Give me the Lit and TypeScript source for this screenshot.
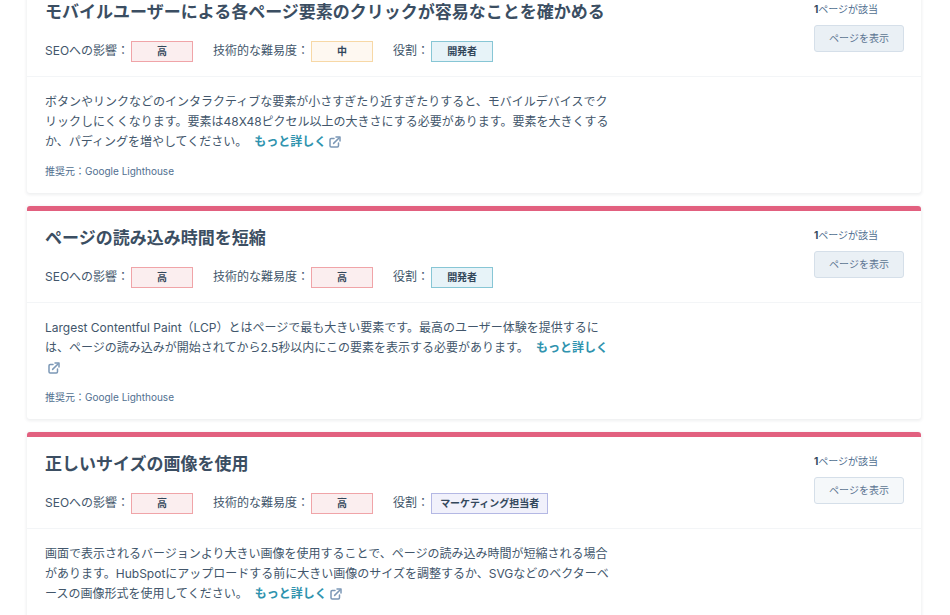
import { LitElement, html, css, svg } from "lit";
import { customElement, property } from "lit/decorators.js";
import { classMap } from "lit/directives/class-map.js";

type Tone = "high" | "medium" | "developer" | "marketer";

interface Tag {
  label: string;
  value: string;
  tone: Tone;
}

interface Recommendation {
  title: string;
  tags: Tag[];
  lines: string[];
  source?: string;
  iconOnNewLine?: boolean;
  quietButton?: boolean;
}

const impact: Tag = { label: "SEOへの影響：", value: "高", tone: "high" };
const difficulty = (value: string, tone: Tone): Tag => ({ label: "技術的な難易度：", value, tone });
const role = (value: string, tone: Tone): Tag => ({ label: "役割：", value, tone });

const recommendations: Recommendation[] = [
  {
    title: "モバイルユーザーによる各ページ要素のクリックが容易なことを確かめる",
    tags: [impact, difficulty("中", "medium"), role("開発者", "developer")],
    lines: [
      "ボタンやリンクなどのインタラクティブな要素が小さすぎたり近すぎたりすると、モバイルデバイスでク",
      "リックしにくくなります。要素は48X48ピクセル以上の大きさにする必要があります。要素を大きくする",
      "か、パディングを増やしてください。",
    ],
    source: "Google Lighthouse",
  },
  {
    title: "ページの読み込み時間を短縮",
    tags: [impact, difficulty("高", "high"), role("開発者", "developer")],
    lines: [
      "Largest Contentful Paint（LCP）とはページで最も大きい要素です。最高のユーザー体験を提供するに",
      "は、ページの読み込みが開始されてから2.5秒以内にこの要素を表示する必要があります。",
    ],
    source: "Google Lighthouse",
    iconOnNewLine: true,
  },
  {
    title: "正しいサイズの画像を使用",
    tags: [impact, difficulty("高", "high"), role("マーケティング担当者", "marketer")],
    lines: [
      "画面で表示されるバージョンより大きい画像を使用することで、ページの読み込み時間が短縮される場合",
      "があります。HubSpotにアップロードする前に大きい画像のサイズを調整するか、SVGなどのベクターベ",
      "ースの画像形式を使用してください。",
    ],
    quietButton: true,
  },
];

const externalPaths = svg`
  <path d="M5 2.5H2.2Q1 2.5 1 3.7V9.8Q1 11 2.2 11H8.3Q9.5 11 9.5 9.8V7" />
  <path d="M4.6 7.4L10 2" />
  <path d="M7 1H11V5" />
`;

@customElement("recommendation-card")
export class RecommendationCard extends LitElement {
  @property({ attribute: false }) item!: Recommendation;

  static styles = css`
    :host {
      display: block;
      border-top: 5px solid #e2607f;
      border-radius: 3px;
      background: #fff;
      box-shadow: 0 1px 3px 1px rgba(45, 62, 80, 0.08);
    }
    .head {
      display: flex;
      justify-content: space-between;
      padding: 14px 17px 14px 18px;
      border-bottom: 1px solid #f3f5f7;
    }
    .title {
      margin: 0 0 16px;
      font-size: 17px;
      line-height: 26px;
      font-weight: 600;
      color: #3b4e62;
    }
    .tags {
      display: flex;
      gap: 20px;
    }
    .pair {
      display: flex;
      gap: 2px;
      line-height: 20px;
      white-space: nowrap;
    }
    .tag {
      box-sizing: border-box;
      min-width: 62px;
      height: 21px;
      padding: 0 8px;
      border: 1px solid;
      font-size: 10px;
      line-height: 19px;
      font-weight: 700;
      text-align: center;
      color: #33475b;
    }
    .high {
      background: #fbeeef;
      border-color: #f0a4a8;
    }
    .medium {
      background: #fef8f1;
      border-color: #f7d8a6;
    }
    .developer {
      background: #e7f3f8;
      border-color: #87c6d5;
    }
    .marketer {
      background: #f1f1fb;
      border-color: #b4b8e4;
    }
    .side {
      flex: none;
      width: 90px;
      font-size: 10px;
      color: #516f90;
    }
    .count {
      margin: 0 0 5px;
      line-height: 21px;
    }
    .count b {
      color: #33475b;
    }
    .show {
      display: block;
      width: 100%;
      height: 27px;
      padding: 0 0 2px;
      border: 1px solid #d5dfe9;
      border-radius: 3px;
      background: #eaf0f5;
      font: inherit;
      color: #5c7592;
    }
    .show.quiet {
      background: #f5f8fa;
    }
    .body {
      padding: 15px 18px 12px;
    }
    .text {
      margin: 0;
      line-height: 20px;
      white-space: nowrap;
    }
    .more {
      margin-left: 7px;
      font-weight: 700;
      color: #2f93ae;
      text-decoration: none;
    }
    .icon {
      width: 12px;
      height: 12px;
      margin-left: 3px;
      vertical-align: -2px;
      fill: none;
      stroke: #7c98b6;
      stroke-width: 1.5;
      stroke-linecap: round;
      stroke-linejoin: round;
    }
    .source {
      margin: 9px 0 0;
      font-size: 10px;
      line-height: 20px;
      color: #516f90;
    }
  `;

  render() {
    const { title, tags, lines, source, iconOnNewLine, quietButton } = this.item;
    return html`
      <div class="head">
        <div>
          <h2 class="title">${title}</h2>
          <div class="tags">
            ${tags.map(
              (t) => html`<div class="pair">
                <span>${t.label}</span>
                <span class=${classMap({ tag: true, [t.tone]: true })}>${t.value}</span>
              </div>`
            )}
          </div>
        </div>
        <div class="side">
          <p class="count"><b>1</b>ページが該当</p>
          <button type="button" class=${classMap({ show: true, quiet: !!quietButton })}>ページを表示</button>
        </div>
      </div>
      <div class="body">
        <p class="text">
          ${lines.map((line, i) => html`${i ? html`<br />` : ""}${line}`)}<a class="more" href="#"
            >もっと詳しく${iconOnNewLine ? html`<br />` : ""}<svg class="icon" viewBox="0 0 12 12" aria-hidden="true">${externalPaths}</svg></a>
        </p>
        ${source ? html`<p class="source">推奨元：${source}</p>` : ""}
      </div>
    `;
  }
}

@customElement("app-root")
export class AppRoot extends LitElement {
  static styles = css`
    :host {
      display: block;
      height: 100vh;
      overflow: hidden;
      background: #fff;
      font-family: Inter, "Noto Sans CJK JP", sans-serif;
      font-size: 12px;
      color: #42566b;
    }
    .list {
      display: flex;
      flex-direction: column;
      gap: 13px;
      margin: -20px 29px 0 27px;
      /* the last card runs on past the fold */
    }
    .list > :last-child {
      min-height: 213px;
    }
  `;

  render() {
    return html`<main class="list">
      ${recommendations.map((item) => html`<recommendation-card .item=${item}></recommendation-card>`)}
    </main>`;
  }
}
